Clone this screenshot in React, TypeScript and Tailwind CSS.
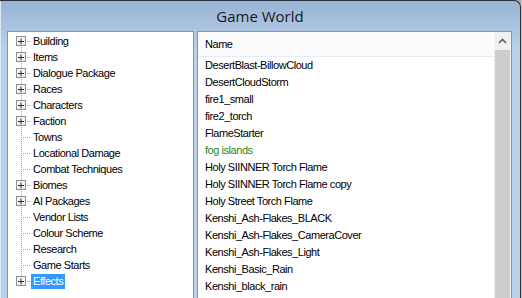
import React from 'react';

const treeItems = [
  { label: 'Building', expandable: true },
  { label: 'Items', expandable: true },
  { label: 'Dialogue Package', expandable: true },
  { label: 'Races', expandable: true },
  { label: 'Characters', expandable: true },
  { label: 'Faction', expandable: true },
  { label: 'Towns', expandable: false },
  { label: 'Locational Damage', expandable: false },
  { label: 'Combat Techniques', expandable: false },
  { label: 'Biomes', expandable: true },
  { label: 'AI Packages', expandable: true },
  { label: 'Vendor Lists', expandable: false },
  { label: 'Colour Scheme', expandable: false },
  { label: 'Research', expandable: false },
  { label: 'Game Starts', expandable: false },
  { label: 'Effects', expandable: true, selected: true },
];

const effects = [
  { name: 'DesertBlast-BillowCloud' },
  { name: 'DesertCloudStorm' },
  { name: 'fire1_small' },
  { name: 'fire2_torch' },
  { name: 'FlameStarter' },
  { name: 'fog islands', changed: true },
  { name: 'Holy SIINNER Torch Flame' },
  { name: 'Holy SIINNER Torch Flame copy' },
  { name: 'Holy Street Torch Flame' },
  { name: 'Kenshi_Ash-Flakes_BLACK' },
  { name: 'Kenshi_Ash-Flakes_CameraCover' },
  { name: 'Kenshi_Ash-Flakes_Light' },
  { name: 'Kenshi_Basic_Rain' },
  { name: 'Kenshi_black_rain' },
];

// dotted tree connectors + expander box, drawn per row
const TreeGutter: React.FC<{ first: boolean; last: boolean; expandable: boolean }> = ({ first, last, expandable }) => {
  const dots = (x1: number, y1: number, x2: number, y2: number) => {
    const out: React.ReactNode[] = [];
    if (x1 === x2) {
      for (let y = y1; y <= y2; y += 2) out.push(<rect key={`v${y}`} x={x1} y={y} width={1} height={1} fill="#a0a0a0" />);
    } else {
      for (let x = x1; x <= x2; x += 2) out.push(<rect key={`h${x}`} x={x} y={y1} width={1} height={1} fill="#a0a0a0" />);
    }
    return out;
  };
  return (
    <svg width="23" height="16" className="shrink-0">
      {dots(13, first ? 8 : 0, 13, last ? 8 : 15)}
      {dots(expandable ? 19 : 15, 8, 21, 8)}
      {expandable && (
        <g>
          <rect x={8.5} y={3.5} width={9} height={9} fill="#f4f4f4" stroke="#919191" />
          <rect x={10} y={8} width={6} height={1} fill="#1c2f5c" />
          <rect x={12.5} y={5.5} width={1} height={6} fill="#1c2f5c" />
        </g>
      )}
    </svg>
  );
};

const App: React.FC = () => {
  return (
    <div className="w-[522px] h-[298px] overflow-hidden flex bg-[#a9a9a9]">
      <div className="flex-1 flex flex-col rounded-tr-[7px] border-t border-r border-[#2a3440] overflow-hidden bg-[linear-gradient(to_bottom,#98b4d4_0px,#b9d1ea_48px)] shadow-[inset_1px_0_0_#dce8f4]">
        <div className="h-[30px] shrink-0 flex items-center justify-center text-[15px] text-[#1a1a1a] font-['Open_Sans',sans-serif] pt-[1px]">
          Game World
        </div>

        <div className="shrink-0 flex gap-[3px] pl-[7px] pr-[8px] font-['Liberation_Sans',Arial,sans-serif] text-[11px] tracking-[-0.45px] text-black">
          {/* tree */}
          <div className="w-[187px] h-[300px] bg-white border border-[#8f949b] pt-[1px]">
            {treeItems.map((item, i) => (
              <div key={item.label} className="h-[16px] flex items-center">
                <TreeGutter first={i === 0} last={i === treeItems.length - 1} expandable={item.expandable} />
                <span
                  className={
                    item.selected
                      ? 'px-[2px] h-[15px] leading-[15px] bg-[#3399ff] text-white'
                      : 'px-[2px] leading-[15px]'
                  }
                >
                  {item.label}
                </span>
              </div>
            ))}
          </div>

          {/* list */}
          <div className="flex-1 h-[300px] bg-white border border-[#8f949b] flex">
            <div className="flex-1 flex flex-col">
              <div className="h-[25px] shrink-0 bg-[#fbfbfb] border-b border-[#e3ecf7] flex items-center pl-[7px]">
                Name
              </div>
              {effects.map((e) => (
                <div
                  key={e.name}
                  className={`h-[17px] shrink-0 flex items-center pl-[7px] ${e.changed ? 'text-[#1f8a1f]' : ''}`}
                >
                  {e.name}
                </div>
              ))}
            </div>
            <div className="w-[17px] bg-[#f0f0f0] flex flex-col items-center">
              <div className="h-[18px] w-full flex items-center justify-center">
                <svg width="9" height="6" viewBox="0 0 9 6">
                  <path d="M1 5 L4.5 1.5 L8 5" fill="none" stroke="#606060" strokeWidth="1.6" />
                </svg>
              </div>
              <div className="flex-1 w-[15px] bg-[#cdcdcd]" />
            </div>
          </div>
        </div>
      </div>
      <div className="w-[1px] bg-[#c4c4c4]" />
    </div>
  );
};

export default App;
